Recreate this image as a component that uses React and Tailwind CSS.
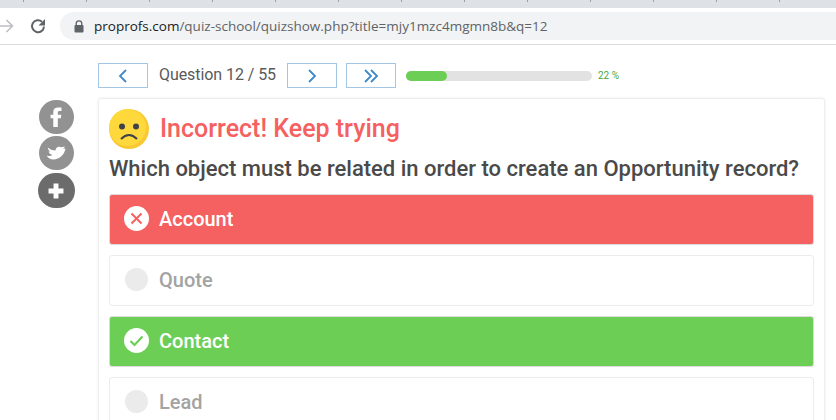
import React from 'react';

const tabTicks = [0, 1, 2, 3, 4, 5, 6, 7, 8, 9, 10, 11, 12];

function NavButton({ children }) {
    return (
        <button className="flex h-[25px] w-[50px] items-center justify-center border border-[#a3c6e4] bg-white">
            {children}
        </button>
    );
}

function Chevron({ flip }) {
    return (
        <svg width="10" height="14" viewBox="0 0 10 14" fill="none" stroke="#3f88c9" strokeWidth="1.8" className={flip ? 'rotate-180' : ''}>
            <path d="M8 1 L2 7 L8 13" />
        </svg>
    );
}

function Option({ label, state }) {
    const box = state === 'wrong'
        ? 'border-[#dcdcdc] bg-[#f56060] text-white font-medium'
        : state === 'right'
            ? 'border-[#dcdcdc] bg-[#6dce55] text-white font-medium'
            : 'border-[#ececec] bg-white text-[#a3a3a3] font-medium';
    return (
        <div className={`flex h-[51px] shrink-0 items-center gap-[10px] rounded-[3px] border pb-[2px] pl-[14px] text-[20px] ${box}`}>
            {state === 'wrong' && (
                <span className="flex h-[25px] w-[25px] items-center justify-center rounded-full bg-white">
                    <svg width="13" height="13" viewBox="0 0 13 13" fill="none" stroke="#f56060" strokeWidth="2">
                        <path d="M1.5 1.5 L11.5 11.5 M11.5 1.5 L1.5 11.5" />
                    </svg>
                </span>
            )}
            {state === 'right' && (
                <span className="flex h-[25px] w-[25px] items-center justify-center rounded-full bg-white">
                    <svg width="15" height="12" viewBox="0 0 15 12" fill="none" stroke="#6dce55" strokeWidth="2.2">
                        <path d="M1.5 6 L5.5 10 L13.5 1.5" />
                    </svg>
                </span>
            )}
            {!state && <span className="ml-px mr-px h-[23px] w-[23px] rounded-full bg-[#ebebeb]"></span>}
            <span>{label}</span>
        </div>
    );
}

export default function App() {
    return (
        <div className="flex h-[420px] w-[836px] flex-col overflow-hidden bg-white font-['Roboto',sans-serif]">
            <div className="flex h-[8px] shrink-0 items-start bg-[#dee1e6] pl-[23px]">
                {tabTicks.map(t => (
                    <span key={t} className="mr-[62px] h-[2px] w-px shrink-0 bg-[#9a9da3]"></span>
                ))}
            </div>

            <div className="flex h-[37px] shrink-0 items-center border-b border-[#dadce0] bg-white">
                <svg width="14" height="14" viewBox="0 0 14 14" fill="none" stroke="#bdbfc2" strokeWidth="1.6" className="shrink-0">
                    <path d="M0 7 H12.5 M6.5 1 L12.5 7 L6.5 13" />
                </svg>
                <svg width="16" height="16" viewBox="0 0 16 16" fill="none" className="ml-[16px] shrink-0">
                    <path d="M14 8.5 A6 6 0 1 1 12 3.7" stroke="#5f6368" strokeWidth="2" />
                    <path d="M15 1 V7.5 H8.5 Z" fill="#5f6368" />
                </svg>
                <div className="ml-[14px] flex h-[28px] flex-1 items-center rounded-l-full bg-[#f1f3f4] pl-[14px] font-['Open_Sans',sans-serif] text-[13.5px] text-[#5f6368]">
                    <svg width="10" height="13" viewBox="0 0 10 13" className="mr-[10px] shrink-0">
                        <path d="M2.2 5.5 V3.7 A2.8 2.8 0 0 1 7.8 3.7 V5.5" fill="none" stroke="#5f6368" strokeWidth="1.3" />
                        <rect x="0.5" y="5" width="9" height="7.5" rx="1" fill="#5f6368" />
                    </svg>
                    <span><span className="text-[#202124]">proprofs.com</span>/quiz-school/quizshow.php?title=mjy1mzc4mgmn8b&amp;q=12</span>
                </div>
            </div>

            <div className="flex flex-1 pt-[18px]">
                <div className="flex w-[98px] shrink-0 flex-col items-center pl-[16px] pt-[37px]">
                    <span className="-ml-[2px] flex h-[34px] w-[35px] items-center justify-center rounded-full bg-[#929292]">
                        <svg width="12" height="20" viewBox="0 0 13 22" fill="#ffffff">
                            <path d="M3.5 22 V12.5 H0.5 V8.5 H3.5 V5.5 C3.5 2 5.5 0.5 9 0.5 H12.5 V4.5 H10.5 C9 4.5 8.5 5.2 8.5 6.2 V8.5 H12.3 L11.8 12.5 H8.5 V22 Z" />
                        </svg>
                    </span>
                    <span className="-ml-[2px] mt-[2px] flex h-[34px] w-[35px] items-center justify-center rounded-full bg-[#929292]">
                        <svg width="20" height="14" viewBox="0 0 20 14" fill="#ffffff">
                            <path d="M0.5 9.5 C3 10.5 5 10 6.5 9 C4.5 8.5 3 7 2.5 5.5 C3.2 5.7 3.8 5.6 4.3 5.4 C2.8 4.6 1.8 3.3 1.8 1.5 C4 3.3 6.5 4.4 9.5 4.6 C9.3 1.8 12.5 -0.2 15 1.2 L19 0.5 L17.3 2.8 L19.5 2.6 C18.3 9 13.5 13.5 7.5 13.5 C4.5 13.5 2.2 12 0.5 9.5 Z" />
                        </svg>
                    </span>
                    <span className="-ml-[2px] mt-[3px] flex h-[35px] w-[37px] items-center justify-center rounded-full bg-[#6c6c6c]">
                        <svg width="16" height="16" viewBox="0 0 15 15" fill="#ffffff">
                            <path d="M5.2 0.5 H9.8 V5.2 H14.5 V9.8 H9.8 V14.5 H5.2 V9.8 H0.5 V5.2 H5.2 Z" />
                        </svg>
                    </span>
                </div>

                <div className="flex w-[727px] shrink-0 flex-col">
                    <div className="flex h-[25px] shrink-0 items-center">
                        <NavButton><Chevron /></NavButton>
                        <span className="ml-[11px] w-[128px] pb-[2px] text-[16px] tracking-[-0.07px] text-[#5a5a5a]">Question 12 / 55</span>
                        <NavButton><Chevron flip /></NavButton>
                        <span className="ml-[9px]">
                            <NavButton>
                                <svg width="16" height="14" viewBox="0 0 16 14" fill="none" stroke="#3f88c9" strokeWidth="1.8">
                                    <path d="M2 1 L8 7 L2 13 M8 1 L14 7 L8 13" />
                                </svg>
                            </NavButton>
                        </span>
                        <div className="ml-[10px] h-[10px] w-[186px] rounded-full bg-[#e2e2e2]">
                            <div className="h-full w-[41px] rounded-full bg-[#6dce55]"></div>
                        </div>
                        <span className="ml-[6px] pb-[1px] text-[10px] text-[#4ba83a]">22 %</span>
                    </div>

                    <div className="mt-[10px] flex flex-1 flex-col rounded-t-[3px] border border-b-0 border-[#eeeeee] px-[10px] pt-[9px] shadow-[0_0_3px_rgba(0,0,0,0.08)]">
                        <div className="flex h-[42px] shrink-0 items-center">
                            <svg width="42" height="42" viewBox="0 0 42 42" className="-ml-px shrink-0">
                                <circle cx="21" cy="21" r="20" fill="#f9c935" />
                                <circle cx="19.5" cy="19.5" r="18.5" fill="#ffd83b" />
                                <circle cx="14" cy="18.5" r="3" fill="#3e4347" />
                                <circle cx="28" cy="18.5" r="3" fill="#3e4347" />
                                <path d="M13 31 Q21 23 29 31" fill="none" stroke="#3e4347" strokeWidth="2" />
                            </svg>
                            <span className="ml-[10px] text-[25px] font-medium text-[#f56060]">Incorrect! Keep trying</span>
                        </div>
                        <p className="mt-[3px] h-[32px] shrink-0 text-[22px] leading-[32px] font-medium whitespace-nowrap text-[#4a4a4a]">Which object must be related in order to create an Opportunity record?</p>
                        <div className="mt-[9px] flex flex-col gap-[10px]">
                            <Option label="Account" state="wrong" />
                            <Option label="Quote" />
                            <Option label="Contact" state="right" />
                            <Option label="Lead" />
                        </div>
                    </div>
                </div>
            </div>
        </div>
    );
}
